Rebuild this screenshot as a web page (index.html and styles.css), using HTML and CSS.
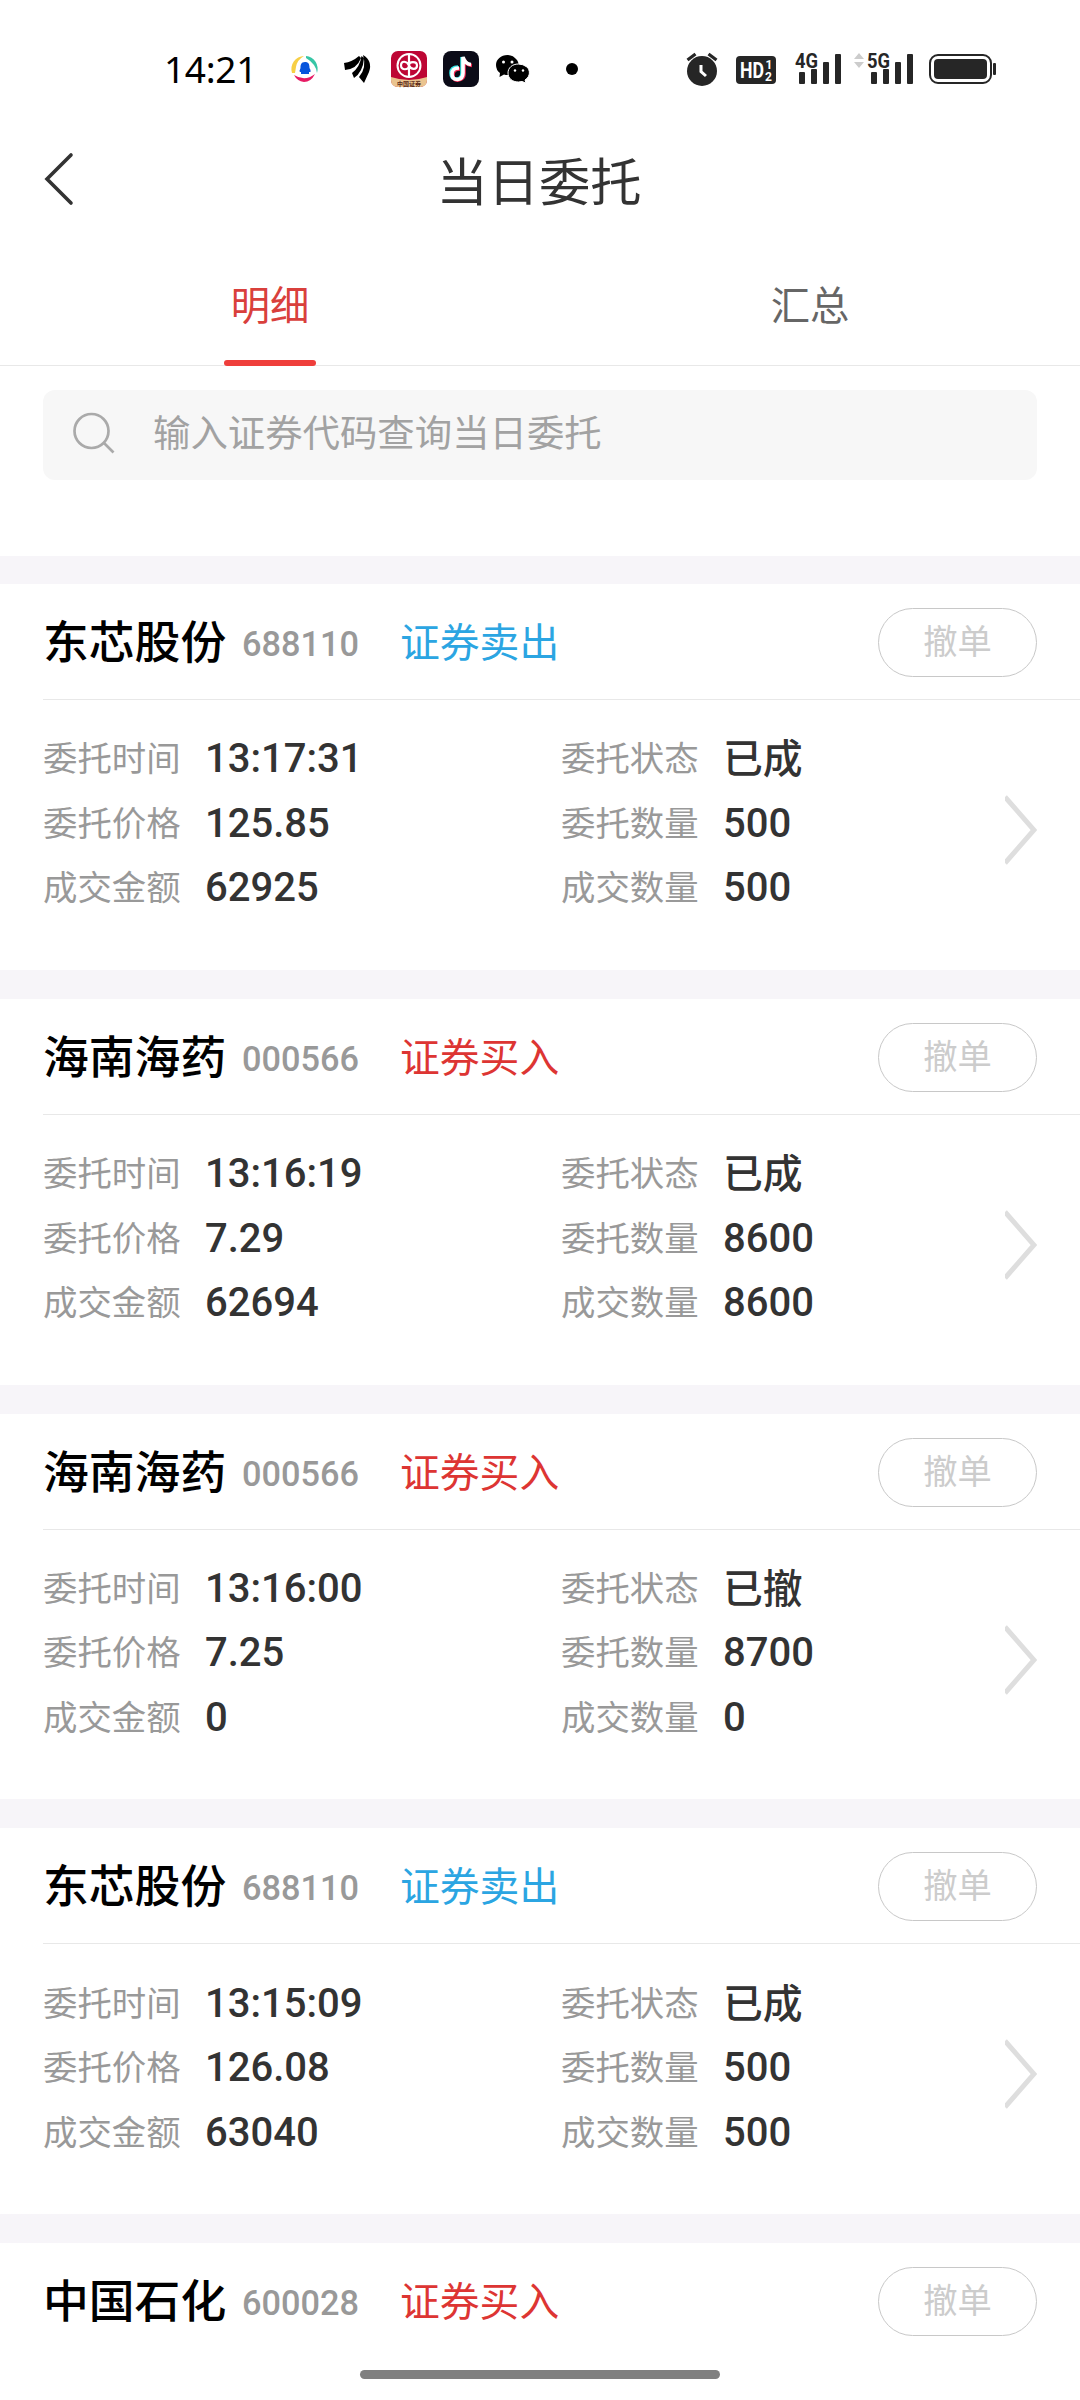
FILE: index.html
```
<!DOCTYPE html>
<html lang="zh-CN">
<head>
	<meta charset="utf-8">
	<title>当日委托</title>
	<link rel="stylesheet" href="styles.css">
</head>
<body>
	<div class="status-bar">
		<span class="time">14:21</span>
		<div class="apps">
			<svg width="28" height="28" viewBox="0 0 28 28" fill="none">
				<path d="M1 18A13 13 0 0 1 13 1Q6 5 5 12Q4.500 15 4 18Z" fill="#f7cf45"/>
				<path d="M15 1A13 13 0 0 1 26 18Q25 9 15 3Z" fill="#37c6a6"/>
				<path d="M3 20Q14 27 24 19Q20 27 13 27Q6 26 3 20Z" fill="#e71b64"/>
				<path d="M14 7C10 7 9.500 10 9.500 13Q8 16 9 17L10 17V19H18V17L19.500 17Q20 15 18.500 13C18.500 9 17.500 7 14 7Z" fill="#0755dc"/>
			</svg>
			<svg class="fan" width="26" height="30" viewBox="0 0 26 30" fill="#000">
				<path d="M0 9Q8 8 15 2L17 4Q13 15 1 16Z"/>
				<path d="M17.500 2L20 4Q19 18 10 24L8 19Q16 13 17.500 2Z"/>
				<path d="M19 1Q29 7 25 18L20 29L15 23Q23 14 19 1Z"/>
			</svg>
			<svg class="broker" width="36" height="36" viewBox="0 0 36 36" fill="none">
				<rect width="36" height="36" rx="7" fill="#bd0634"/>
				<path d="M0 26Q18 32 36 26V29Q36 36 29 36H7Q0 36 0 29Z" fill="#eac48f"/>
				<circle cx="18" cy="14.500" r="11.500" stroke="#fff" stroke-width="2"/>
				<path d="M18 3V14.500C18 19 10 20 10 14.500S16 10 18 14.500S26 19 26 14.500S18 10 18 14.500V26" stroke="#fff" stroke-width="2.200"/>
				<text class="broker-name" x="18" y="34.500" text-anchor="middle">中国证券</text>
			</svg>
			<svg class="tiktok" width="36" height="36" viewBox="0 0 36 36" fill="none">
				<rect width="36" height="36" rx="8" fill="#0b0b17"/>
				<g stroke-width="3.600">
					<path d="M15 16Q8 16 8 22Q8 28 13.500 28Q19 28 19 22V6Q20 12 26 13" stroke="#31e5e5"/>
					<path d="M17 18Q10 18 10 24Q10 30 15.500 29Q21 28 21 23V8Q23 14 29 14.500" stroke="#f32a53"/>
					<path d="M16 17Q9 17 9 23Q9 28.500 14.500 28.500Q20 28 20 22V6Q22 13 28 13.500" stroke="#fff"/>
				</g>
			</svg>
			<svg class="wechat" width="34" height="28" viewBox="0 0 34 28" fill="#000">
				<path d="M11.500 0C5 0 0 4.500 0 10Q0 15 4 18L3.500 22L8 19.500Q13 21 17 18.500C23 16 24 9 21 5Q17 0 11.500 0Z"/>
				<path d="M22.500 9C16 9 12 13 12 18S16 27 22.500 27L26 26.500L30 28L29 25C35 21 34 15 31 12Q27 9 22.500 9Z" stroke="#fff"/>
				<g fill="#fff"><circle cx="7.500" cy="7" r="1.500"/><circle cx="16" cy="7" r="1.500"/><circle cx="19" cy="15.500" r="1.200"/><circle cx="27" cy="15.500" r="1.200"/></g>
			</svg>
			<span class="dot"></span>
		</div>
		<div class="system">
			<svg width="32" height="34" viewBox="0 0 32 34" fill="none">
				<circle cx="16" cy="19" r="15" fill="#262626"/>
				<path d="M1.500 8L9.500 2M22.500 2L30.500 8" stroke="#262626" stroke-width="3.200"/>
				<path d="M15 13V19.500L20 24" stroke="#fff" stroke-width="3"/>
			</svg>
			<svg class="hd" width="40" height="28" viewBox="0 0 40 28">
				<rect width="40" height="28" rx="4" fill="#262626"/>
				<text class="hd-text" x="4" y="22" textLength="24" lengthAdjust="spacingAndGlyphs">HD</text>
				<text class="hd-num" x="29.500" y="13">1</text>
				<text class="hd-num" x="29" y="25">2</text>
			</svg>
			<svg class="signal" width="47" height="34" viewBox="0 0 47 34" fill="#262626">
				<text class="net" x="0" y="15.500" textLength="23" lengthAdjust="spacingAndGlyphs">4G</text>
				<rect x="4" y="20" width="6" height="12" rx="1"/>
				<rect x="16" y="17" width="6" height="15" rx="1"/>
				<rect x="28" y="10" width="6" height="22" rx="1"/>
				<rect x="40" y="2" width="6" height="30" rx="1"/>
			</svg>
			<svg class="traffic" width="10" height="16" viewBox="0 0 10 16" fill="#ccc">
				<path d="M0 6L5 0L10 6ZM0 9H10L5 15Z"/>
			</svg>
			<svg class="signal-5g" width="47" height="34" viewBox="0 0 47 34" fill="#262626">
				<text class="net" x="0" y="15.500" textLength="23" lengthAdjust="spacingAndGlyphs">5G</text>
				<rect x="4" y="20" width="6" height="12" rx="1"/>
				<rect x="16" y="17" width="6" height="15" rx="1"/>
				<rect x="28" y="10" width="6" height="22" rx="1"/>
				<rect x="40" y="2" width="6" height="30" rx="1"/>
			</svg>
			<svg class="battery" width="67" height="30" viewBox="0 0 67 30">
				<rect x="1" y="1" width="61" height="28" rx="8" fill="none" stroke="#262626" stroke-width="2"/>
				<rect x="5" y="5" width="53" height="20" rx="4" fill="#262626"/>
				<rect x="64" y="9" width="3" height="12" rx="1" fill="#262626"/>
			</svg>
		</div>
	</div>

	<div class="header">
		<svg class="back" width="30" height="52" viewBox="0 0 30 52">
			<path d="M27 2L3 26L27 50" fill="none" stroke="#333" stroke-width="3.600" stroke-linecap="round"/>
		</svg>
		<h1 class="title">当日委托</h1>
	</div>

	<div class="tabs">
		<div class="tab active">明细</div>
		<div class="tab">汇总</div>
	</div>

	<div class="search">
		<svg width="42" height="42" viewBox="0 0 42 42" fill="none" stroke="#aaa" stroke-width="2.700">
			<circle cx="18.500" cy="19" r="17"/>
			<path d="M31 31L40.500 40.500"/>
		</svg>
		<span>输入证券代码查询当日委托</span>
	</div>

	<div class="orders">
		<div class="order">
			<div class="order-head">
				<span class="name">东芯股份</span>
				<span class="code">688110</span>
				<span class="side sell">证券卖出</span>
				<span class="cancel">撤单</span>
			</div>
			<div class="order-body">
				<div class="fields">
					<label>委托时间</label><b>13:17:31</b>
					<label>委托状态</label><b class="state">已成</b>
					<label>委托价格</label><b>125.85</b>
					<label>委托数量</label><b>500</b>
					<label>成交金额</label><b>62925</b>
					<label>成交数量</label><b>500</b>
				</div>
				<svg class="arrow" width="32" height="70" viewBox="0 0 32 70"><path d="M0 2L29 35L0 68" fill="none" stroke="#dedede" stroke-width="5"/></svg>
			</div>
		</div>

		<div class="order">
			<div class="order-head">
				<span class="name">海南海药</span>
				<span class="code">000566</span>
				<span class="side buy">证券买入</span>
				<span class="cancel">撤单</span>
			</div>
			<div class="order-body">
				<div class="fields">
					<label>委托时间</label><b>13:16:19</b>
					<label>委托状态</label><b class="state">已成</b>
					<label>委托价格</label><b>7.29</b>
					<label>委托数量</label><b>8600</b>
					<label>成交金额</label><b>62694</b>
					<label>成交数量</label><b>8600</b>
				</div>
				<svg class="arrow" width="32" height="70" viewBox="0 0 32 70"><path d="M0 2L29 35L0 68" fill="none" stroke="#dedede" stroke-width="5"/></svg>
			</div>
		</div>

		<div class="order">
			<div class="order-head">
				<span class="name">海南海药</span>
				<span class="code">000566</span>
				<span class="side buy">证券买入</span>
				<span class="cancel">撤单</span>
			</div>
			<div class="order-body">
				<div class="fields">
					<label>委托时间</label><b>13:16:00</b>
					<label>委托状态</label><b class="state">已撤</b>
					<label>委托价格</label><b>7.25</b>
					<label>委托数量</label><b>8700</b>
					<label>成交金额</label><b>0</b>
					<label>成交数量</label><b>0</b>
				</div>
				<svg class="arrow" width="32" height="70" viewBox="0 0 32 70"><path d="M0 2L29 35L0 68" fill="none" stroke="#dedede" stroke-width="5"/></svg>
			</div>
		</div>

		<div class="order">
			<div class="order-head">
				<span class="name">东芯股份</span>
				<span class="code">688110</span>
				<span class="side sell">证券卖出</span>
				<span class="cancel">撤单</span>
			</div>
			<div class="order-body">
				<div class="fields">
					<label>委托时间</label><b>13:15:09</b>
					<label>委托状态</label><b class="state">已成</b>
					<label>委托价格</label><b>126.08</b>
					<label>委托数量</label><b>500</b>
					<label>成交金额</label><b>63040</b>
					<label>成交数量</label><b>500</b>
				</div>
				<svg class="arrow" width="32" height="70" viewBox="0 0 32 70"><path d="M0 2L29 35L0 68" fill="none" stroke="#dedede" stroke-width="5"/></svg>
			</div>
		</div>

		<div class="order last">
			<div class="order-head">
				<span class="name">中国石化</span>
				<span class="code">600028</span>
				<span class="side buy">证券买入</span>
				<span class="cancel">撤单</span>
			</div>
		</div>
	</div>

	<div class="home-bar"></div>
</body>
</html>
```
FILE: styles.css
```
* {
	box-sizing: border-box;
}

body {
	margin: 0;
	width: 1080px;
	height: 2400px;
	background-color: #fff;
	font-family: Roboto, "Noto Sans CJK SC", sans-serif;
	color: #333;
}

svg {
	display: block;
	flex: none;
	overflow: visible;
}

/* status bar */
.status-bar {
	display: flex;
	align-items: center;
	height: 138px;
	padding-left: 164px;
}

.time {
	width: 127px;
	font-family: "Noto Sans", sans-serif;
	font-size: 37px;
	line-height: 40px;
	letter-spacing: -0.3px;
	color: #000;
	white-space: nowrap;
}

.apps {
	display: flex;
	align-items: center;
	width: 395px;
}

.fan {
	margin-left: 25px;
}

.broker {
	margin-left: 21px;
}

.broker-name {
	font-size: 6px;
	font-weight: bold;
	fill: #5b2a1a;
}

.tiktok {
	margin-left: 16px;
}

.wechat {
	margin-left: 17px;
}

.dot {
	width: 12px;
	height: 12px;
	margin-left: 36px;
	border-radius: 50%;
	background-color: #000;
}

.system {
	display: flex;
	align-items: center;
}

.hd {
	margin: 2px 0 0 18px;
}

.hd-text {
	font-size: 22px;
	font-weight: bold;
	fill: #fff;
}

.hd-num {
	font-size: 12px;
	font-weight: bold;
	fill: #fff;
}

.signal {
	margin-left: 19px;
}

.net {
	font-size: 20px;
	font-weight: bold;
}

.traffic {
	margin: -17px 3px 0 12px;
}

.battery {
	margin-left: 15px;
}

/* title */
.header {
	display: flex;
	align-items: center;
	height: 84px;
	padding-left: 44px;
}

.back {
	margin-bottom: 3px;
}

.title {
	flex: 1;
	margin: 7px 76px 0 0;
	font-size: 51.3px;
	font-weight: normal;
	line-height: 60px;
	text-align: center;
}

.tabs {
	display: flex;
	height: 144px;
	border-bottom: 1px solid #e8e8e8;
}

.tab {
	position: relative;
	flex: 1;
	padding-top: 56px;
	font-size: 39.3px;
	line-height: 58px;
	text-align: center;
	color: #666;
}

.tab.active {
	color: #d9403c;
}

.tab.active::after {
	content: "";
	position: absolute;
	left: 224px;
	bottom: -1px;
	width: 92px;
	height: 6px;
	border-radius: 3px;
	background-color: #ef3e3b;
}

.search {
	display: flex;
	align-items: center;
	gap: 38px;
	height: 90px;
	margin: 24px 43px 76px;
	padding: 0 0 4px 30px;
	border-radius: 12px;
	background-color: #f7f7f7;
	font-size: 37.4px;
	line-height: 54px;
	color: #a2a2a2;
}

.search span {
	margin-top: 2px;
}

/* order list */
.order {
	height: 414.67px;
	border-top: 29px solid #f7f5f9;
}

.order:first-child {
	height: 414px;
	border-top-width: 28px;
}

.order.last {
	height: auto;
}

.order-head {
	display: flex;
	align-items: center;
	height: 116px;
	margin-left: 43px;
	padding-right: 43px;
	border-bottom: 1px solid #e8e8e8;
}

.last .order-head {
	border-bottom-color: transparent;
}

.name {
	width: 199px;
	padding-bottom: 5px;
	font-size: 45.8px;
	font-weight: 500;
	color: #000;
}

.code {
	width: 158px;
	padding-top: 5px;
	font-size: 34.3px;
	font-weight: 500;
	color: #999;
}

.side {
	padding-bottom: 4px;
	font-size: 39.8px;
}

.sell {
	color: #2ba5e2;
}

.buy {
	color: #dd3533;
}

.cancel {
	width: 159px;
	height: 69px;
	margin: 2px 0 0 auto;
	border: 1px solid #c8c8c8;
	border-radius: 35px;
	font-size: 34.3px;
	line-height: 66px;
	text-align: center;
	color: #ccc;
}

.order-body {
	display: flex;
	justify-content: space-between;
	padding: 27px 43px 0;
}

.fields {
	display: grid;
	grid-template-columns: 162px 356px 162px 200px;
	grid-auto-rows: 64.5px;
	align-items: center;
}

.fields label {
	font-size: 34.4px;
	line-height: 64px;
	color: #999;
}

.fields b {
	font-size: 40px;
	font-weight: 500;
	line-height: 64px;
}

.fields .state {
	padding-top: 2px;
	font-size: 39.8px;
	line-height: 62px;
}

.arrow {
	margin-top: 68px;
	overflow: hidden;
}

/* gesture bar */
.home-bar {
	position: absolute;
	left: 360px;
	top: 2370px;
	width: 360px;
	height: 9px;
	border-radius: 5px;
	background-color: #808080;
}
```
